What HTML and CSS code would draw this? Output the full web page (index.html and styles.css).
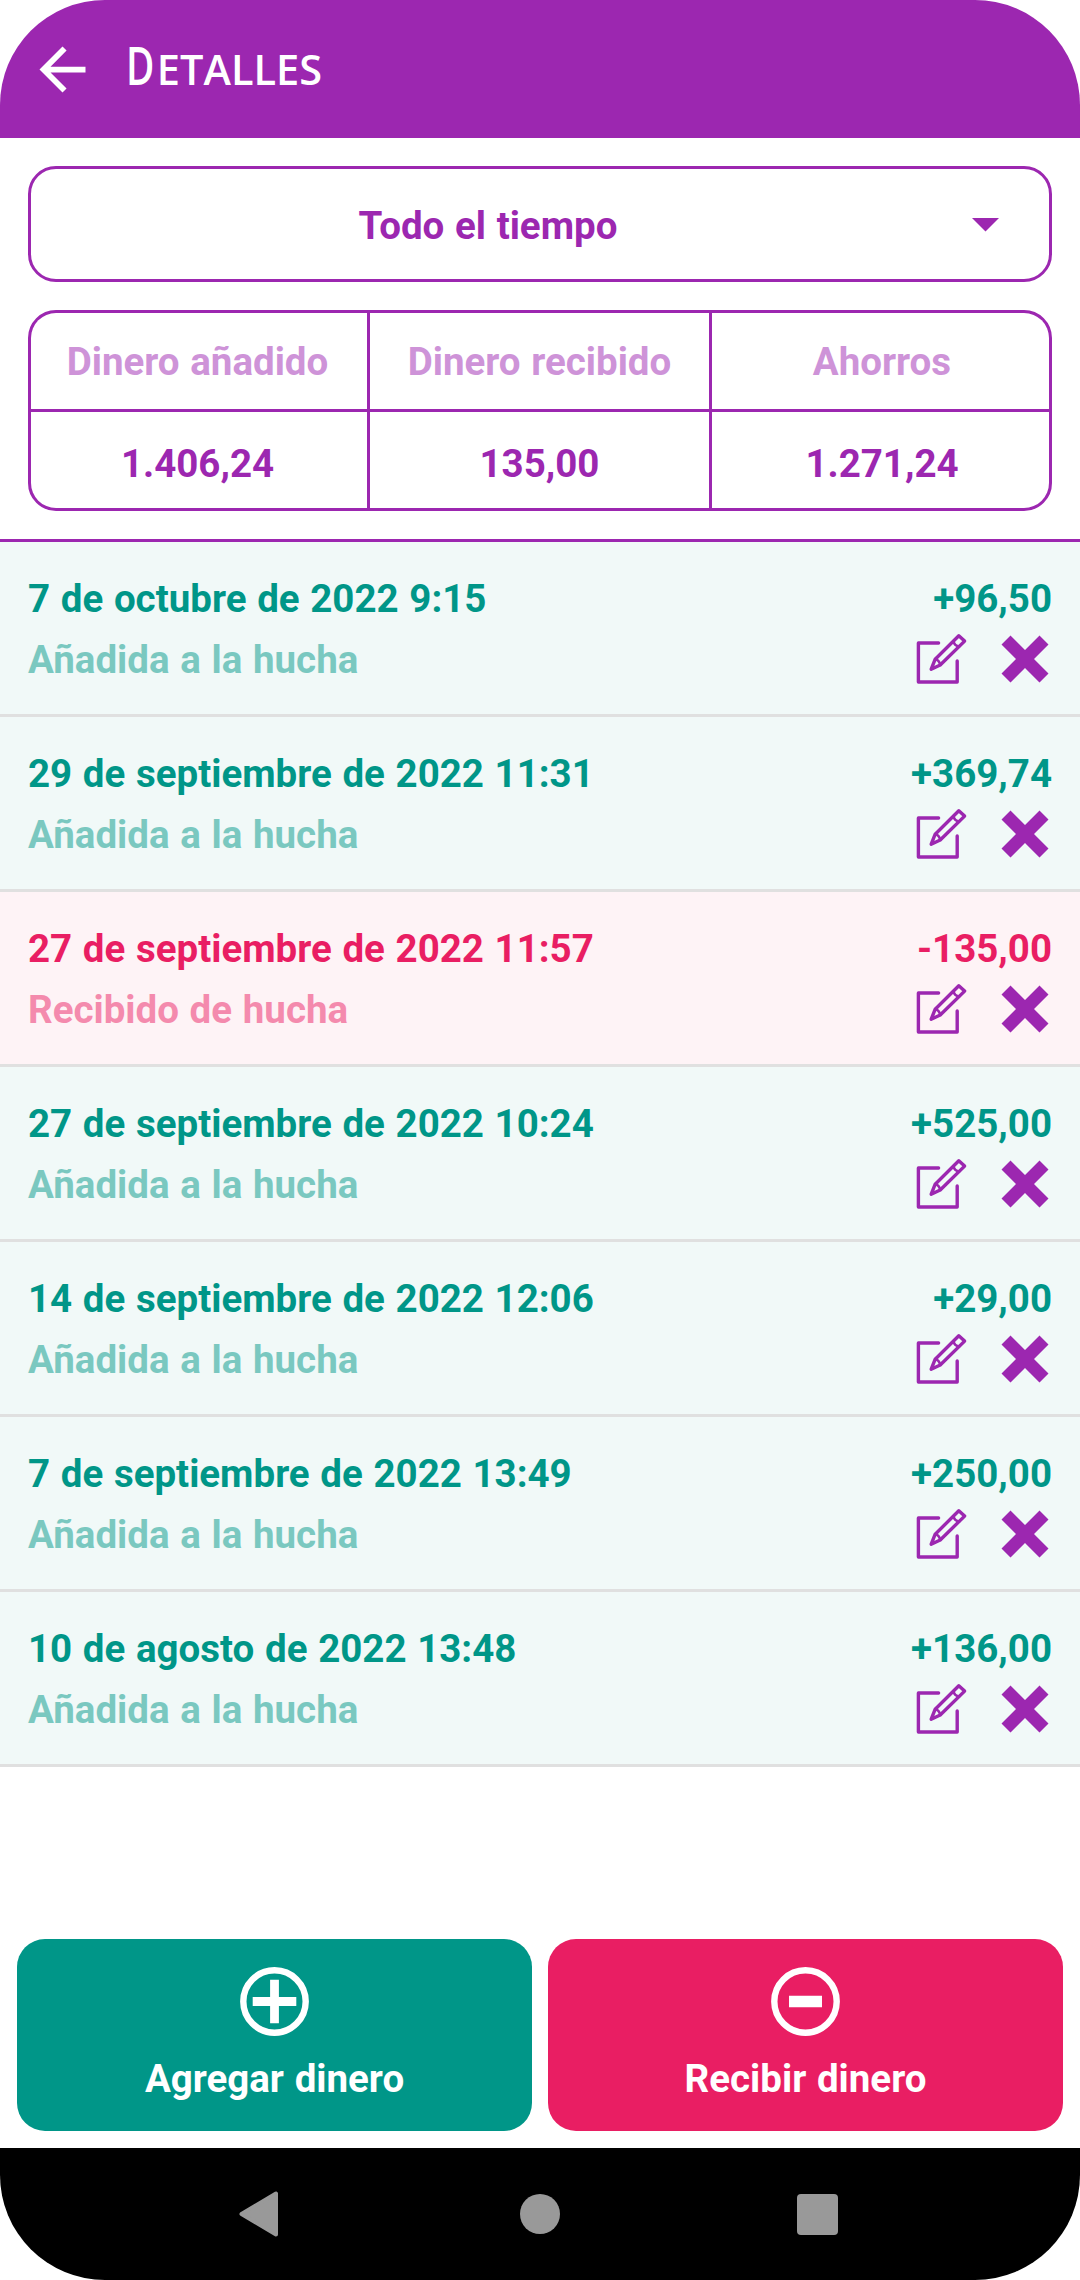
FILE: index.html
```html
<!doctype html>
<html lang="es">
<head>
<meta charset="utf-8">
<title>Detalles</title>
<meta name="viewport" content="width=device-width, initial-scale=1">
<link rel="stylesheet" href="styles.css">
</head>
<body>
<svg class="defs">
  <symbol id="edit" viewBox="0 0 52 52">
    <g fill="none" stroke="currentColor" stroke-width="3.4" stroke-linejoin="round" stroke-linecap="round">
      <path d="M22.6 10H2.4V49H41.2V28"/>
      <path d="M42.8 2.8L48.6 8.1L24.2 32L15.2 36.2L19.2 26.2Z"/>
      <path d="M19.2 26.2Q23.4 27 24.2 32M37.4 8.2Q38.4 12.6 43.2 13.6" stroke-width="2.6"/>
    </g>
  </symbol>
  <symbol id="delete" viewBox="0 0 48 48">
    <path d="M9.5 0.5L24 15L38.5 0.5L47.5 9.5L33 24L47.5 38.5L38.5 47.5L24 33L9.5 47.5L0.5 38.5L15 24L0.5 9.5Z" fill="currentColor"/>
  </symbol>
</svg>
<div class="screen">
  <header class="top-bar">
    <svg class="back" viewBox="0 0 24 24"><path d="M20 11H7.83l5.59-5.59L12 4l-8 8 8 8 1.41-1.41L7.83 13H20z" fill="#fff"/></svg>
    <h1><span class="initial">D</span>etalles</h1>
  </header>

  <div class="filters">
    <div class="period">
      <span>Todo el tiempo</span>
      <svg class="caret" viewBox="0 0 27 14"><path d="M0 0h27L13.5 13.5z" fill="#9c27b0"/></svg>
    </div>
    <div class="summary">
      <div class="label first">Dinero añadido</div>
      <div class="label">Dinero recibido</div>
      <div class="label last">Ahorros</div>
      <div class="value first">1.406,24</div>
      <div class="value">135,00</div>
      <div class="value last">1.271,24</div>
    </div>
  </div>

  <div class="entries">
    <div class="entry">
      <div class="date">7 de octubre de 2022 9:15</div><div class="amount">+96,50</div>
      <div class="kind">Añadida a la hucha</div>
      <div class="actions"><svg class="edit"><use href="#edit"/></svg><svg class="delete"><use href="#delete"/></svg></div>
    </div>
    <div class="entry">
      <div class="date">29 de septiembre de 2022 11:31</div><div class="amount">+369,74</div>
      <div class="kind">Añadida a la hucha</div>
      <div class="actions"><svg class="edit"><use href="#edit"/></svg><svg class="delete"><use href="#delete"/></svg></div>
    </div>
    <div class="entry out">
      <div class="date">27 de septiembre de 2022 11:57</div><div class="amount">-135,00</div>
      <div class="kind">Recibido de hucha</div>
      <div class="actions"><svg class="edit"><use href="#edit"/></svg><svg class="delete"><use href="#delete"/></svg></div>
    </div>
    <div class="entry">
      <div class="date">27 de septiembre de 2022 10:24</div><div class="amount">+525,00</div>
      <div class="kind">Añadida a la hucha</div>
      <div class="actions"><svg class="edit"><use href="#edit"/></svg><svg class="delete"><use href="#delete"/></svg></div>
    </div>
    <div class="entry">
      <div class="date">14 de septiembre de 2022 12:06</div><div class="amount">+29,00</div>
      <div class="kind">Añadida a la hucha</div>
      <div class="actions"><svg class="edit"><use href="#edit"/></svg><svg class="delete"><use href="#delete"/></svg></div>
    </div>
    <div class="entry">
      <div class="date">7 de septiembre de 2022 13:49</div><div class="amount">+250,00</div>
      <div class="kind">Añadida a la hucha</div>
      <div class="actions"><svg class="edit"><use href="#edit"/></svg><svg class="delete"><use href="#delete"/></svg></div>
    </div>
    <div class="entry">
      <div class="date">10 de agosto de 2022 13:48</div><div class="amount">+136,00</div>
      <div class="kind">Añadida a la hucha</div>
      <div class="actions"><svg class="edit"><use href="#edit"/></svg><svg class="delete"><use href="#delete"/></svg></div>
    </div>
  </div>

  <div class="buttons">
    <div class="button add">
      <svg viewBox="0 0 69 69"><circle cx="34.5" cy="34.5" r="31.2" fill="none" stroke="#fff" stroke-width="6.4"/><path d="M34.5 12.7V56.3M12.7 34.5H56.3" stroke="#fff" stroke-width="8.8"/></svg>
      <span>Agregar dinero</span>
    </div>
    <div class="button take">
      <svg viewBox="0 0 69 69"><circle cx="34.5" cy="34.5" r="31.2" fill="none" stroke="#fff" stroke-width="6.4"/><path d="M18 34.5H51" stroke="#fff" stroke-width="11.5"/></svg>
      <span>Recibir dinero</span>
    </div>
  </div>

  <nav class="nav-bar">
    <svg viewBox="0 0 46 46"><path d="M37 2.5V43.5L2.5 23Z" fill="#999" stroke="#999" stroke-width="4" stroke-linejoin="round"/></svg>
    <svg viewBox="0 0 46 46"><circle cx="23" cy="23" r="20" fill="#999"/></svg>
    <svg viewBox="0 0 46 46"><rect x="2" y="3" width="41" height="41" rx="4" fill="#999"/></svg>
  </nav>
</div>
</body>
</html>
```
FILE: styles.css
```css
body {
  margin: 0;
  background-color: white;
  font-family: Roboto, sans-serif;
  font-size: 38.5px;
  font-weight: bold;
  word-spacing: 1.1px;
  color: #9c27b0;
}
.defs {
  display: none;
}
.screen {
  display: flex;
  flex-direction: column;
  width: 1080px;
  height: 2280px;
  border-radius: 105px;
  overflow: hidden;
}
.top-bar {
  display: flex;
  align-items: center;
  height: 138px;
  padding-left: 28px;
  color: white;
  background-color: #9c27b0;
}
.back {
  width: 69px;
  height: 69px;
}
h1 {
  margin: 0 0 4px 29px;
  font-family: "Open Sans", sans-serif;
  font-size: 41.5px;
  font-weight: 600;
  line-height: 70px;
  text-transform: uppercase;
}
.initial {
  display: inline-block;
  font-size: 53px;
  font-weight: 600;
  transform: scaleX(0.73);
  transform-origin: left;
  margin-right: -8px;
}
.filters {
  padding: 28px;
  border-bottom: 3px solid #9c27b0;
}
.period, .summary {
  border: 3px solid #9c27b0;
  border-radius: 28px;
}
.period {
  display: flex;
  align-items: center;
  height: 108px;
  padding: 2px 50px 0 0;
  margin-bottom: 28px;
}
.period span {
  flex: 1;
  text-align: center;
  padding-right: 27px;
}
.caret {
  width: 27px;
  height: 14px;
}
/* the gaps let the purple background through as grid lines */
.summary {
  display: grid;
  grid-template-columns: 336px 339px 337px;
  grid-template-rows: 96px 96px;
  gap: 3px;
  background-color: #9c27b0;
  overflow: hidden;
}
.label, .value {
  background-color: white;
  text-align: center;
  line-height: 98px;
}
.label {
  color: #ce93d8;
}
.value {
  line-height: 104px;
}
.first {
  padding-right: 3px;
}
.last {
  padding-left: 3px;
}
.entry {
  display: grid;
  grid-template-columns: 1fr auto;
  grid-template-rows: 61px 61px;
  line-height: 61px;
  height: 146px;
  padding: 26px 28px 0;
  border-bottom: 3px solid #e0e0e0;
  color: #009688;
  background-color: #f1f9f8;
}
.amount {
  text-align: right;
}
.kind {
  color: #7ac8c0;
}
.out {
  color: #e91e63;
  background-color: #fef3f6;
}
.out .kind {
  color: #f48aad;
}
.actions {
  display: flex;
  justify-content: flex-end;
  align-items: center;
  padding: 0 3px 2px 0;
  color: #9c27b0;
}
.edit {
  width: 52px;
  height: 52px;
}
.delete {
  width: 48px;
  height: 48px;
  margin-left: 33px;
}
.buttons {
  display: flex;
  gap: 16px;
  padding: 0 17px 17px;
  margin-top: auto;
}
.button {
  flex: 1;
  display: flex;
  flex-direction: column;
  align-items: center;
  height: 164px;
  padding-top: 28px;
  border-radius: 28px;
  color: white;
}
.button svg {
  width: 69px;
  height: 69px;
}
.button span {
  line-height: 46px;
  margin-top: 20px;
}
.add {
  background-color: #009688;
}
.take {
  background-color: #e91e63;
}
.nav-bar {
  display: flex;
  justify-content: center;
  align-items: center;
  gap: 232px;
  height: 132px;
  background-color: black;
}
.nav-bar svg {
  width: 46px;
  height: 46px;
}
```
